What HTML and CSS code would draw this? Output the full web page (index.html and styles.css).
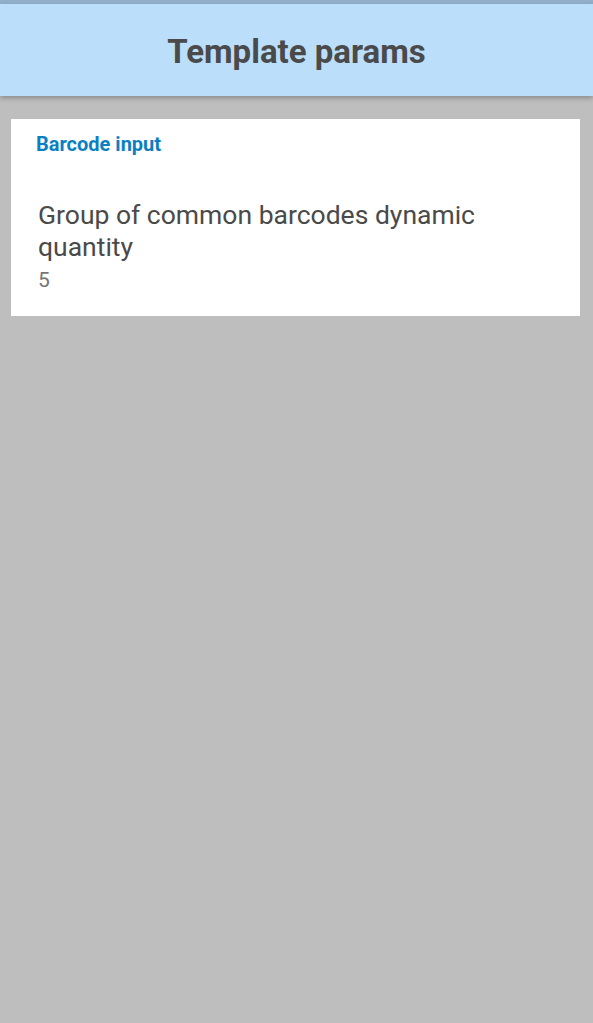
FILE: index.html
```html
<!DOCTYPE html>
<html>
<head>
<meta charset="utf-8">
<link rel="stylesheet" href="styles.css">
</head>
<body>
<div class="status"></div>
<header class="appbar"><h1 class="title">Template params</h1></header>
<main class="content">
  <section class="card">
    <div class="section-title">Barcode input</div>
    <div class="pref">
      <div class="pref-title">Group of common barcodes dynamic quantity</div>
      <div class="pref-value">5</div>
    </div>
  </section>
</main>
</body>
</html>
```
FILE: styles.css
```css
html, body {
  margin: 0;
  padding: 0;
  height: 100%;
}
body {
  background: #bebebe;
  font-family: Roboto, "Noto Sans", sans-serif;
  overflow: hidden;
}
.status {
  height: 4px;
  background: #93b0cb;
}
.appbar {
  height: 92px;
  background: #bbdefa;
  display: flex;
  align-items: center;
  justify-content: center;
  box-shadow: 0 2px 5px rgba(0,0,0,0.28);
  position: relative;
  z-index: 1;
}
.title {
  margin: 0;
  font-size: 33px;
  font-weight: 700;
  color: #4a4a4a;
  line-height: 40px;
  padding-top: 3px;
}
.content {
  padding: 23px 13px 0 11px;
}
.card {
  background: #fff;
  height: 197px;
  box-sizing: border-box;
  padding: 13px 0 0 25px;
}
.section-title {
  font-size: 20px;
  font-weight: 700;
  color: #0b7fc0;
  line-height: 24px;
}
.pref {
  margin-top: 43px;
  padding-left: 2px;
  padding-right: 60px;
}
.pref-title {
  font-size: 26.5px;
  color: #4a4a4a;
  line-height: 32px;
}
.pref-value {
  margin-top: 3px;
  font-size: 21px;
  color: #757575;
  line-height: 28px;
}
```
